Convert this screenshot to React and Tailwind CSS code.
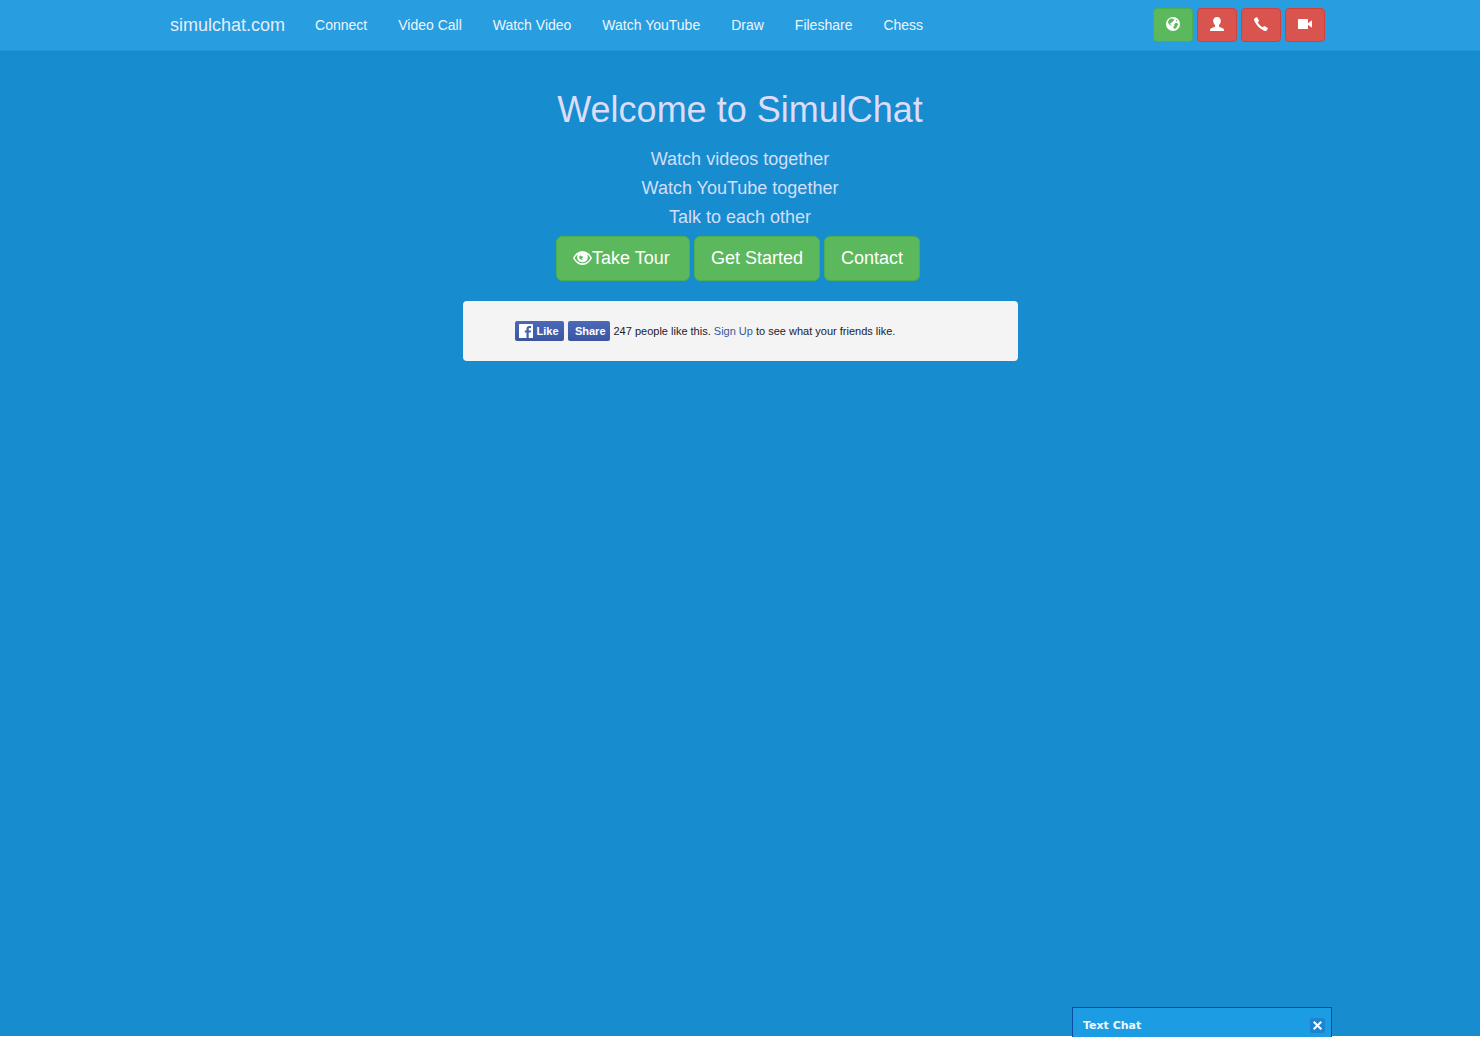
import React from "react";

const navItems = ["Connect", "Video Call", "Watch Video", "Watch YouTube", "Draw", "Fileshare", "Chess"];
const taglines = ["Watch videos together", "Watch YouTube together", "Talk to each other"];

function GlobeIcon() {
  return (
    <svg viewBox="0 0 14 14" className="size-3.5" aria-hidden="true">
      <circle cx="7" cy="7" r="7" fill="#fff" />
      <path
        fill="#5cb85c"
        d="M2.6 3.4 3.9 2.1 5.4 1.4 6.9 1.5 6.2 2.4 7.5 1.9 8.4 2.6 7.8 3.5 6.9 4.3 6.4 5.2 5.3 5.5 4.6 6.4 3.9 6.6 4.2 7.4 5.2 7.6 5.6 8.4 4.4 8.2 2.9 7.2 2.2 5.8 2.1 4.5ZM8.8 6.5 10 5.8 11.4 6.2 12.4 7.4 11.5 8.3 11 9.8 9.7 11.4 8.6 11.7 7.2 10.9 7.4 9.6 8.7 9.1 8 8.2ZM9.8 2.8 11 3.2 11.5 4.4 10.2 4.3Z"
      />
    </svg>
  );
}

function UserIcon() {
  return (
    <svg viewBox="0 0 14 14" className="size-3.5" fill="currentColor" aria-hidden="true">
      <path d="M7 0C9.4 0 10.8 1.4 10.8 3.7C10.8 5.5 10.1 7 9 8V9.2C9 9.7 9.2 9.9 9.7 10.1L12.7 11.3C13.5 11.7 14 12.2 14 13V14H0V13C0 12.2.5 11.7 1.3 11.3L4.3 10.1C4.8 9.9 5 9.7 5 9.2V8C3.9 7 3.2 5.5 3.2 3.7C3.2 1.4 4.6 0 7 0Z" />
    </svg>
  );
}

function PhoneIcon() {
  return (
    <svg viewBox="0 0 14 14" className="size-3.5" fill="currentColor" aria-hidden="true">
      <path d="M.6 1.3 2 .4C2.5 0 3 .1 3.3.6L4.8 3.2C5.1 3.7 5 4.1 4.6 4.5L3.7 5.2C4.7 7.1 6.9 9.3 8.8 10.3L9.5 9.4C9.9 9 10.3 8.9 10.8 9.2L13.4 10.7C13.9 11 14 11.5 13.6 12L12.7 13.4C11.9 14.2 10.5 14 9.2 13.3C5.8 11.6 2.4 8.2.7 4.8C0 3.5-.2 2.1.6 1.3Z" />
    </svg>
  );
}

function VideoIcon() {
  return (
    <svg viewBox="0 0 14 14" className="size-3.5" fill="currentColor" aria-hidden="true">
      <path d="M.5 2H9.5Q10 2 10 2.5V6.2L13.3 3.7Q14 3.2 14 4V10Q14 10.8 13.3 10.3L10 7.8V11.5Q10 12 9.5 12H.5Q0 12 0 11.5V2.5Q0 2 .5 2Z" />
    </svg>
  );
}

function EyeIcon() {
  return (
    <svg viewBox="0 0 19 14" className="mb-0.5 h-3.5 w-[19px] shrink-0" aria-hidden="true">
      <path fill="#fff" d="M9.5 0C14 0 17.3 3.5 19 7C17.3 10.5 14 14 9.5 14S1.7 10.5 0 7C1.7 3.5 5 0 9.5 0Z" />
      <path
        fill="#5cb85c"
        d="M4.8 3.2C3.5 4.2 2.4 5.6 1.6 7C3.4 10.2 6.1 12.3 9.5 12.3S15.6 10.2 17.4 7C16.6 5.6 15.5 4.2 14.2 3.2C16 8 13.4 11.2 9.5 11.2S3 8 4.8 3.2Z"
      />
      <path fill="#5cb85c" d="M7.3 4.2 8.5 5.5C9 4.9 10 5.2 10 6.1C10 6.9 9.3 7.2 8.6 7L9.7 8.6C8 9.1 6.4 8.2 6.2 6.6C6.1 5.6 6.5 4.7 7.3 4.2Z" />
    </svg>
  );
}

const tools = [
  { label: "Online status", Icon: GlobeIcon, tone: "bg-[#5cb85c] border-[#4cae4c]" },
  { label: "User", Icon: UserIcon, tone: "bg-[#d9534f] border-[#d43f3a]" },
  { label: "Call", Icon: PhoneIcon, tone: "bg-[#d9534f] border-[#d43f3a]" },
  { label: "Video", Icon: VideoIcon, tone: "bg-[#d9534f] border-[#d43f3a]" },
];

function ActionButton({ children }) {
  return (
    <button
      type="button"
      className="flex items-center rounded-md border border-[#4cae4c] bg-[#5cb85c] px-4 py-2 text-lg leading-[27px] text-white first:min-w-[134px]"
    >
      {children}
    </button>
  );
}

function Navbar() {
  return (
    <header className="border-b border-[#1f97da] bg-[#289ddf]">
      <div className="mx-auto flex max-w-[1170px] items-start justify-between">
        <nav className="flex h-[50px] items-center">
          <a href="#home" className="px-[15px] text-lg leading-5 text-[#e4edfb]">
            simulchat.com
          </a>
          <div className="flex items-center gap-px">
            {navItems.map((item) => (
              <a key={item} href="#nav" className="px-[15px] text-sm leading-5 text-[#eef5fd]">
                {item}
              </a>
            ))}
          </div>
        </nav>
        <div className="flex gap-1 pt-2">
          {tools.map(({ label, Icon, tone }) => (
            <button
              key={label}
              type="button"
              aria-label={label}
              className={`flex h-[34px] w-10 items-center justify-center rounded border pb-0.5 text-white ${tone}`}
            >
              <Icon />
            </button>
          ))}
        </div>
      </div>
    </header>
  );
}

function LikeBar() {
  return (
    <section className="mt-5 flex h-[60px] w-full max-w-[555px] items-center gap-1 rounded bg-[#f4f4f4] px-[52px] text-[11px] text-[#1d2129]">
      <button
        type="button"
        className="flex h-5 w-[49px] items-center gap-1 rounded-xs bg-linear-to-b from-[#4c69ba] to-[#3b55a0] px-1 font-bold text-white"
      >
        <svg viewBox="0 0 14 14" className="size-3.5 shrink-0" aria-hidden="true">
          <rect width="14" height="14" rx=".5" fill="#fff" />
          <path fill="#4460ae" d="M7.5 14V8.6H5.8V6.5H7.5V5C7.5 3.1 8.6 2.1 10.4 2.1H12V4.1H10.8C10 4.1 9.7 4.5 9.7 5.1V6.5H12L11.7 8.6H9.7V14Z" />
        </svg>
        Like
      </button>
      <button
        type="button"
        className="flex h-5 w-[42px] items-center justify-end rounded-xs bg-linear-to-b from-[#4c69ba] to-[#3b55a0] pr-1 font-bold text-white"
      >
        Share
      </button>
      <p className="whitespace-nowrap">
        247 people like this. <a href="#signup" className="text-[#365899]">Sign Up</a> to see what your friends like.
      </p>
    </section>
  );
}

function ChatPanel() {
  return (
    <aside className="fixed right-[148px] bottom-0 flex h-[30px] w-[260px] items-end justify-between border border-b-0 border-[#0b4da2] bg-[#1c9ce2] pr-1.5 pb-1 pl-2.5">
      <h2 className="font-['DejaVu_Sans',sans-serif] text-[11px] leading-3.5 font-bold text-[#eef7fd]">Text Chat</h2>
      <button type="button" aria-label="Close chat" className="flex size-[15px] items-center justify-center rounded-xs bg-[#1e84cc]">
        <svg viewBox="0 0 9 9" className="size-[9px]" aria-hidden="true">
          <path d="M.7 .7 8.3 8.3M8.3 .7 .7 8.3" stroke="#fff" strokeWidth="2" />
        </svg>
      </button>
    </aside>
  );
}

export default function App() {
  return (
    <div className="min-h-screen border-b border-white bg-[#178ccf] font-['Liberation_Sans',Arial,sans-serif]">
      <Navbar />
      <main className="flex flex-col items-center pt-[39px]">
        <h1 className="text-4xl leading-10 text-[#dcdcfb]">Welcome to SimulChat</h1>
        <div className="mt-[15px] text-center text-lg leading-[29px] text-[#d3def8]">
          {taglines.map((line) => (
            <p key={line}>{line}</p>
          ))}
        </div>
        <div className="mt-1 mr-1 flex gap-1">
          <ActionButton>
            <EyeIcon />
            Take Tour
          </ActionButton>
          <ActionButton>Get Started</ActionButton>
          <ActionButton>Contact</ActionButton>
        </div>
        <LikeBar />
      </main>
      <ChatPanel />
    </div>
  );
}
